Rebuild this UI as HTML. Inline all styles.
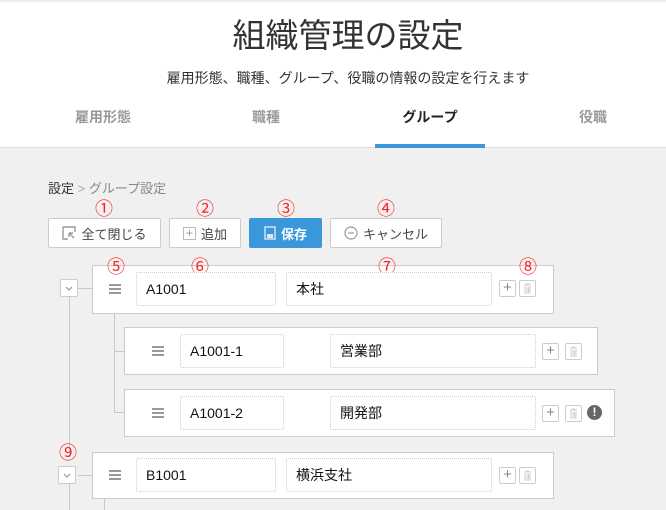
<!DOCTYPE html>
<html><head><meta charset="utf-8"><style>
*{box-sizing:border-box;margin:0;padding:0}
body{width:666px;height:510px;overflow:hidden;background:#f0f0f0;font-family:"Liberation Sans","Noto Sans CJK JP",sans-serif;color:#333;position:relative}
.a{position:absolute}
.hdr{left:0;top:0;width:666px;height:148px;background:#fff;border-bottom:1px solid #ddd;border-top:2px solid #eee}
.title{left:30px;width:666px;top:9px;text-align:center;font-size:33px;color:#333}
.sub{left:30px;width:666px;top:68px;text-align:center;font-size:14px;color:#333}
.tab{top:107px;width:166px;text-align:center;font-size:14px;font-weight:bold;color:#999}
.btn{top:218px;height:30px;background:#fff;border:1px solid #ccc;border-radius:2px;font-size:13px;color:#444;display:flex;align-items:center;justify-content:center;gap:5px}
.num{color:#f22;font-size:18px;text-align:center;width:22px;line-height:20px}
.box{background:#fff;border:1px solid #ccc}
.in{background:#fff;border:1px dotted #ccc;border-radius:2px;font-size:14px;color:#111;padding-left:9px;display:flex;align-items:center}
.ham{width:12px;height:10px;border-top:2px solid #999;border-bottom:2px solid #999}
.ham::after{content:"";display:block;margin-top:2px;height:2px;background:#999}
.sb{width:17px;height:17px;border:1px solid #ccc;border-radius:2px;background:#fff;color:#888;font-size:15px;line-height:14px;text-align:center}
.ln{background:#c8c8c8}
.tg{width:18px;height:18px;border:1px solid #ccc;background:#fff;border-radius:2px}
</style></head><body>
<div class="a hdr"></div>
<div class="a title" style="left:15px">組織管理の設定</div>
<div class="a sub" style="left:15px">雇用形態、職種、グループ、役職の情報の設定を行えます</div>
<div class="a tab" style="left:20px">雇用形態</div>
<div class="a tab" style="left:183px">職種</div>
<div class="a tab" style="left:347px;color:#222">グループ</div>
<div class="a tab" style="left:510px">役職</div>
<div class="a" style="left:375px;top:144px;width:110px;height:4px;background:#3a97d9"></div>

<div class="a" style="left:48px;top:178px;font-size:13px">設定 <span style="color:#aaa">&gt;</span> <span style="color:#888">グループ設定</span></div>

<div class="a num" style="left:93px;top:199px">①</div>
<div class="a num" style="left:194px;top:199px">②</div>
<div class="a num" style="left:275px;top:199px">③</div>
<div class="a num" style="left:375px;top:199px">④</div>
<div class="a btn" style="left:48px;width:113px"><svg width="14" height="14"><path d="M1 1h12v5M1 1v12h5" fill="none" stroke="#999" stroke-width="1.4"/><path d="M12 12L7 7M7 7v4M7 7h4" fill="none" stroke="#999" stroke-width="1.4"/></svg>全て閉じる</div>
<div class="a btn" style="left:169px;width:72px"><span style="border:1px solid #bbb;width:13px;height:13px;font-size:12px;line-height:11px;text-align:center;color:#999">+</span>追加</div>
<div class="a btn" style="left:249px;width:73px;background:#3a97d9;border-color:#3a97d9;color:#fff;font-weight:bold"><svg width="12" height="14"><rect x="1" y="1" width="10" height="12" fill="none" stroke="#dbeaf7" stroke-width="1.4"/><rect x="3" y="8" width="6" height="4" fill="#dbeaf7"/></svg>保存</div>
<div class="a btn" style="left:330px;width:112px"><svg width="14" height="14"><circle cx="7" cy="7" r="6" fill="none" stroke="#999" stroke-width="1.2"/><path d="M4 7h6" stroke="#999" stroke-width="1.2"/></svg>キャンセル</div>

<div class="a ln" style="left:69px;top:297px;width:1px;height:160px"></div>
<div class="a ln" style="left:69px;top:479px;width:1px;height:31px"></div>
<div class="a ln" style="left:78px;top:288px;width:14px;height:1px"></div>
<div class="a ln" style="left:78px;top:475px;width:14px;height:1px"></div>
<div class="a ln" style="left:114px;top:313px;width:1px;height:99px"></div>
<div class="a ln" style="left:114px;top:351px;width:10px;height:1px"></div>
<div class="a ln" style="left:114px;top:412px;width:10px;height:1px"></div>
<div class="a ln" style="left:104px;top:498px;width:1px;height:12px"></div>

<div class="a tg" style="left:60px;top:279px"><svg width="16" height="16"><path d="M5 7l3 3 3-3" fill="none" stroke="#999" stroke-width="1.2"/></svg></div>
<div class="a tg" style="left:58px;top:466px"><svg width="16" height="16"><path d="M5 7l3 3 3-3" fill="none" stroke="#999" stroke-width="1.2"/></svg></div>
<div class="a num" style="left:57px;top:443px">⑨</div>

<div class="a box" style="left:92px;top:265px;width:462px;height:49px"></div>
<div class="a num" style="left:105px;top:257px">⑤</div>
<div class="a num" style="left:189px;top:257px">⑥</div>
<div class="a num" style="left:376px;top:257px">⑦</div>
<div class="a num" style="left:517px;top:257px">⑧</div>
<div class="a ham" style="left:109px;top:284px"></div>
<div class="a in" style="left:136px;top:272px;width:140px;height:34px">A1001</div>
<div class="a in" style="left:286px;top:272px;width:206px;height:34px">本社</div>
<div class="a sb" style="left:499px;top:280px">+</div>
<div class="a sb" style="left:519px;top:280px"><svg width="15" height="15"><path d="M4 4h7M6 3h3M5 5v7h5V5M7 6v5M8.5 6v5" fill="none" stroke="#ccc"/></svg></div>

<div class="a box" style="left:124px;top:327px;width:474px;height:48px"></div>
<div class="a ham" style="left:152px;top:346px"></div>
<div class="a in" style="left:180px;top:334px;width:104px;height:34px">A1001-1</div>
<div class="a in" style="left:330px;top:334px;width:206px;height:34px">営業部</div>
<div class="a sb" style="left:542px;top:343px">+</div>
<div class="a sb" style="left:565px;top:343px"><svg width="15" height="15"><path d="M4 4h7M6 3h3M5 5v7h5V5M7 6v5M8.5 6v5" fill="none" stroke="#ccc"/></svg></div>

<div class="a box" style="left:124px;top:389px;width:491px;height:48px"></div>
<div class="a ham" style="left:152px;top:408px"></div>
<div class="a in" style="left:180px;top:396px;width:104px;height:34px">A1001-2</div>
<div class="a in" style="left:330px;top:396px;width:206px;height:34px">開発部</div>
<div class="a sb" style="left:542px;top:405px">+</div>
<div class="a sb" style="left:565px;top:405px"><svg width="15" height="15"><path d="M4 4h7M6 3h3M5 5v7h5V5M7 6v5M8.5 6v5" fill="none" stroke="#ccc"/></svg></div>
<div class="a" style="left:587px;top:405px;width:15px;height:15px;border-radius:50%;background:#666;color:#fff;font-size:12px;font-weight:bold;text-align:center;line-height:15px">!</div>

<div class="a box" style="left:92px;top:452px;width:462px;height:47px"></div>
<div class="a ham" style="left:109px;top:470px"></div>
<div class="a in" style="left:136px;top:458px;width:140px;height:34px">B1001</div>
<div class="a in" style="left:286px;top:458px;width:206px;height:34px">横浜支社</div>
<div class="a sb" style="left:499px;top:467px">+</div>
<div class="a sb" style="left:519px;top:467px"><svg width="15" height="15"><path d="M4 4h7M6 3h3M5 5v7h5V5M7 6v5M8.5 6v5" fill="none" stroke="#ccc"/></svg></div>
</body></html>
